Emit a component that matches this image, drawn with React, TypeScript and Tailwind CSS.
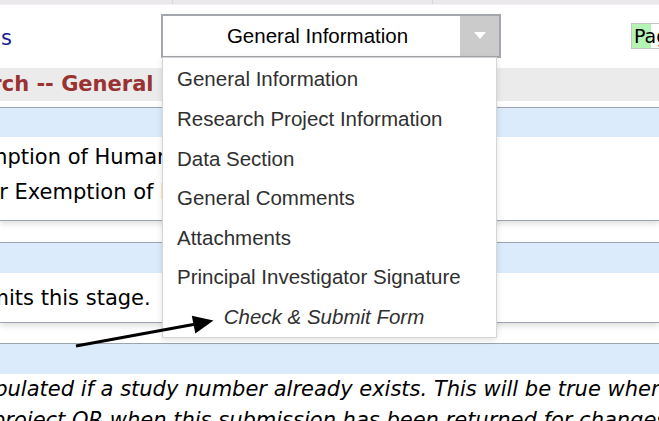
export default function App() {
  const sections = [
    "General Information",
    "Research Project Information",
    "Data Section",
    "General Comments",
    "Attachments",
    "Principal Investigator Signature",
  ];

  return (
    <div className="relative w-[659px] h-[421px] overflow-hidden bg-white text-black font-['DejaVu_Sans',sans-serif]">
      {/* tab strip */}
      <div className="flex h-[5px] border-b border-[#f3f2f4]">
        <div className="w-[173px] bg-[#eae8eb] border-r border-[#d8d6da]" />
        <div className="w-[260px] bg-[#eae8eb] border-r border-[#d8d6da]" />
        <div className="flex-1 bg-[#eae8eb]" />
      </div>

      {/* header row */}
      <div className="flex h-[63px] items-start">
        <div className="ml-[1px] w-[11px] mt-[23px] shrink-0 flex justify-end overflow-hidden whitespace-nowrap text-[21px] leading-none text-[#1a1a95]">
          Instructions
        </div>

        <div className="ml-[149px] mt-[9px] w-[340px] h-[44px] shrink-0 flex border-2 border-[#a3a6ac] bg-white font-['Liberation_Sans',sans-serif]">
          <div className="flex-1 flex items-center justify-center pl-[12px] pt-[1px] text-[20.5px] text-black whitespace-nowrap">
            General Information
          </div>
          <div className="w-[39px] bg-[#cbcbcb] flex items-center justify-center">
            <svg width="12" height="8" viewBox="0 0 12 8">
              <polygon points="0,0 12,0 6,7" fill="#ffffff" />
            </svg>
          </div>
        </div>

        <div className="ml-[130px] mt-[18px] h-[26px] w-[80px] shrink-0 border border-[#c4c4c4] bg-[linear-gradient(to_right,#b3f3b3_19px,#ffffff_19px)] pl-[2px] flex items-center text-[19px] leading-none whitespace-nowrap">
          Page 1 of 5
        </div>
      </div>

      {/* section title */}
      <div className="h-[33px] bg-[#ebebeb] flex items-center overflow-hidden">
        <span className="ml-[-80px] whitespace-nowrap text-[21px] font-bold text-[#993333]">
          Research -- General Information
        </span>
      </div>

      {/* exemption box */}
      <div className="mt-[6px] border-t border-b border-[#9ea3b1] shadow-[0_3px_6px_rgba(0,0,0,0.13)]">
        <div className="h-[29px] bg-[#dbebfb]" />
        <div className="pt-[3px] pb-[10px] text-[21px] leading-[35px] whitespace-nowrap">
          <div className="ml-[-51px]">Exemption of Human Subjects</div>
          <div className="ml-[-113px]">Request for Exemption of Human</div>
        </div>
      </div>

      {/* routing box */}
      <div className="mt-[21px] border-t border-b border-[#9ea3b1] shadow-[0_3px_6px_rgba(0,0,0,0.13)]">
        <div className="h-[30px] bg-[#dbebfb]" />
        <div className="pt-[8px] pb-[6px] text-[21px] leading-[35px] whitespace-nowrap">
          <div className="ml-[-49px]">submits this stage.</div>
        </div>
      </div>

      {/* study number box */}
      <div className="mt-[20px] border-t border-[#9ea3b1]">
        <div className="h-[30px] bg-[#dbebfb]" />
        <div className="text-[21px] leading-[31px] italic whitespace-nowrap">
          <div className="ml-[-32px]">populated if a study number already exists. This will be true when</div>
          <div className="ml-[-8px]">project OR when this submission has been returned for changes.</div>
        </div>
      </div>

      {/* open section menu */}
      <div className="absolute left-[162px] top-[57px] w-[335px] border border-[#d5d5d5] bg-white pt-[2px] shadow-[0_2px_6px_rgba(0,0,0,0.12)] font-['Liberation_Sans',sans-serif] text-[20.5px] text-[#303030]">
        {sections.map((s) => (
          <div key={s} className="h-[39.6px] flex items-center pl-[14px] whitespace-nowrap">
            {s}
          </div>
        ))}
        <div className="h-[39.6px] flex items-center justify-center pl-[14px] pr-[25px] italic whitespace-nowrap">
          Check &amp; Submit Form
        </div>
      </div>

      {/* pointer arrow */}
      <svg
        className="absolute left-[70px] top-[312px] pointer-events-none"
        width="150"
        height="40"
        viewBox="0 0 150 40"
      >
        <line x1="6" y1="34" x2="126" y2="12" stroke="#000" strokeWidth="3.2" />
        <polygon points="143.5,8.5 121.8,3.8 125.3,21.4" fill="#000" />
      </svg>
    </div>
  );
}
